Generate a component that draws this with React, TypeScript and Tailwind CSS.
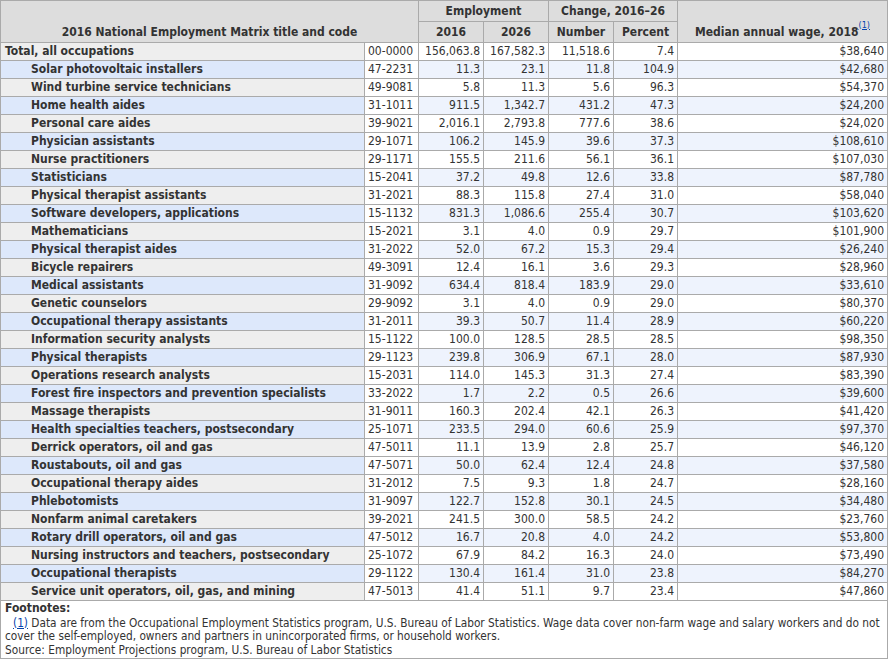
import React from 'react';

type Row = {
  title: string;
  code: string;
  emp2016: string;
  emp2026: string;
  number: string;
  percent: string;
  wage: string;
};

const rows: Row[] = [
  { title: 'Total, all occupations', code: '00-0000', emp2016: '156,063.8', emp2026: '167,582.3', number: '11,518.6', percent: '7.4', wage: '$38,640' },
  { title: 'Solar photovoltaic installers', code: '47-2231', emp2016: '11.3', emp2026: '23.1', number: '11.8', percent: '104.9', wage: '$42,680' },
  { title: 'Wind turbine service technicians', code: '49-9081', emp2016: '5.8', emp2026: '11.3', number: '5.6', percent: '96.3', wage: '$54,370' },
  { title: 'Home health aides', code: '31-1011', emp2016: '911.5', emp2026: '1,342.7', number: '431.2', percent: '47.3', wage: '$24,200' },
  { title: 'Personal care aides', code: '39-9021', emp2016: '2,016.1', emp2026: '2,793.8', number: '777.6', percent: '38.6', wage: '$24,020' },
  { title: 'Physician assistants', code: '29-1071', emp2016: '106.2', emp2026: '145.9', number: '39.6', percent: '37.3', wage: '$108,610' },
  { title: 'Nurse practitioners', code: '29-1171', emp2016: '155.5', emp2026: '211.6', number: '56.1', percent: '36.1', wage: '$107,030' },
  { title: 'Statisticians', code: '15-2041', emp2016: '37.2', emp2026: '49.8', number: '12.6', percent: '33.8', wage: '$87,780' },
  { title: 'Physical therapist assistants', code: '31-2021', emp2016: '88.3', emp2026: '115.8', number: '27.4', percent: '31.0', wage: '$58,040' },
  { title: 'Software developers, applications', code: '15-1132', emp2016: '831.3', emp2026: '1,086.6', number: '255.4', percent: '30.7', wage: '$103,620' },
  { title: 'Mathematicians', code: '15-2021', emp2016: '3.1', emp2026: '4.0', number: '0.9', percent: '29.7', wage: '$101,900' },
  { title: 'Physical therapist aides', code: '31-2022', emp2016: '52.0', emp2026: '67.2', number: '15.3', percent: '29.4', wage: '$26,240' },
  { title: 'Bicycle repairers', code: '49-3091', emp2016: '12.4', emp2026: '16.1', number: '3.6', percent: '29.3', wage: '$28,960' },
  { title: 'Medical assistants', code: '31-9092', emp2016: '634.4', emp2026: '818.4', number: '183.9', percent: '29.0', wage: '$33,610' },
  { title: 'Genetic counselors', code: '29-9092', emp2016: '3.1', emp2026: '4.0', number: '0.9', percent: '29.0', wage: '$80,370' },
  { title: 'Occupational therapy assistants', code: '31-2011', emp2016: '39.3', emp2026: '50.7', number: '11.4', percent: '28.9', wage: '$60,220' },
  { title: 'Information security analysts', code: '15-1122', emp2016: '100.0', emp2026: '128.5', number: '28.5', percent: '28.5', wage: '$98,350' },
  { title: 'Physical therapists', code: '29-1123', emp2016: '239.8', emp2026: '306.9', number: '67.1', percent: '28.0', wage: '$87,930' },
  { title: 'Operations research analysts', code: '15-2031', emp2016: '114.0', emp2026: '145.3', number: '31.3', percent: '27.4', wage: '$83,390' },
  { title: 'Forest fire inspectors and prevention specialists', code: '33-2022', emp2016: '1.7', emp2026: '2.2', number: '0.5', percent: '26.6', wage: '$39,600' },
  { title: 'Massage therapists', code: '31-9011', emp2016: '160.3', emp2026: '202.4', number: '42.1', percent: '26.3', wage: '$41,420' },
  { title: 'Health specialties teachers, postsecondary', code: '25-1071', emp2016: '233.5', emp2026: '294.0', number: '60.6', percent: '25.9', wage: '$97,370' },
  { title: 'Derrick operators, oil and gas', code: '47-5011', emp2016: '11.1', emp2026: '13.9', number: '2.8', percent: '25.7', wage: '$46,120' },
  { title: 'Roustabouts, oil and gas', code: '47-5071', emp2016: '50.0', emp2026: '62.4', number: '12.4', percent: '24.8', wage: '$37,580' },
  { title: 'Occupational therapy aides', code: '31-2012', emp2016: '7.5', emp2026: '9.3', number: '1.8', percent: '24.7', wage: '$28,160' },
  { title: 'Phlebotomists', code: '31-9097', emp2016: '122.7', emp2026: '152.8', number: '30.1', percent: '24.5', wage: '$34,480' },
  { title: 'Nonfarm animal caretakers', code: '39-2021', emp2016: '241.5', emp2026: '300.0', number: '58.5', percent: '24.2', wage: '$23,760' },
  { title: 'Rotary drill operators, oil and gas', code: '47-5012', emp2016: '16.7', emp2026: '20.8', number: '4.0', percent: '24.2', wage: '$53,800' },
  { title: 'Nursing instructors and teachers, postsecondary', code: '25-1072', emp2016: '67.9', emp2026: '84.2', number: '16.3', percent: '24.0', wage: '$73,490' },
  { title: 'Occupational therapists', code: '29-1122', emp2016: '130.4', emp2026: '161.4', number: '31.0', percent: '23.8', wage: '$84,270' },
  { title: 'Service unit operators, oil, gas, and mining', code: '47-5013', emp2016: '41.4', emp2026: '51.1', number: '9.7', percent: '23.4', wage: '$47,860' },
];

const th = 'border border-[#aaaaaa] bg-[#dddddd] font-bold text-center px-1 leading-[20px]';
const num = 'border border-[#aaaaaa] text-right pr-[3px] pl-1 leading-[17px] whitespace-nowrap';

export default function App() {
  return (
    <div
      className="w-[891px] h-[661px] bg-white text-[#333333] text-[12px]"
      style={{ fontFamily: '"DejaVu Sans Condensed", "DejaVu Sans", sans-serif' }}
    >
      <table className="table-fixed border-collapse w-[887px]">
        <colgroup>
          <col className="w-[364px]" />
          <col className="w-[54px]" />
          <col className="w-[65px]" />
          <col className="w-[65px]" />
          <col className="w-[65px]" />
          <col className="w-[64px]" />
          <col className="w-[210px]" />
        </colgroup>
        <thead>
          <tr className="h-[21px]">
            <th rowSpan={2} colSpan={2} className={`${th} align-bottom`}>
              2016 National Employment Matrix title and code
            </th>
            <th colSpan={2} className={th}>Employment</th>
            <th colSpan={2} className={th}>Change, 2016–26</th>
            <th rowSpan={2} className={`${th} align-bottom`}>
              Median annual wage, 2018
              <sup className="text-[9px] font-normal text-[#0645ad] underline align-[4px]">(1)</sup>
            </th>
          </tr>
          <tr className="h-[21px]">
            <th className={th}>2016</th>
            <th className={th}>2026</th>
            <th className={th}>Number</th>
            <th className={th}>Percent</th>
          </tr>
        </thead>
        <tbody>
          {rows.map((r, i) => {
            const blue = i % 2 === 1;
            const dataBg = blue ? 'bg-[#eef3fd]' : 'bg-white';
            return (
              <tr key={r.code} className="h-[18px]">
                <th
                  className={`border border-[#aaaaaa] text-left font-bold leading-[17px] whitespace-nowrap ${
                    i === 0 ? 'pl-[4px]' : 'pl-[30px]'
                  } ${blue ? 'bg-[#dde8fb]' : 'bg-[#eeeeee]'}`}
                >
                  {r.title}
                </th>
                <td className="border border-[#aaaaaa] bg-white pl-[3px] leading-[17px]">{r.code}</td>
                <td className={`${num} ${dataBg}`}>{r.emp2016}</td>
                <td className={`${num} ${dataBg}`}>{r.emp2026}</td>
                <td className={`${num} ${dataBg}`}>{r.number}</td>
                <td className={`${num} ${dataBg}`}>{r.percent}</td>
                <td className={`${num} ${dataBg}`}>{r.wage}</td>
              </tr>
            );
          })}
        </tbody>
        <tfoot>
          <tr>
            <td colSpan={7} className="border border-[#aaaaaa] px-[4px] pt-0 pb-0">
              <div className="font-bold leading-[15px]">Footnotes:</div>
              <p className="text-[11.75px] leading-[13px] mt-[1px] whitespace-nowrap">
                <span className="pl-[8px] text-[#0645ad] underline">(1)</span> Data are from the Occupational
                Employment Statistics program, U.S. Bureau of Labor Statistics. Wage data cover non-farm wage and
                salary workers and do not
                <br />
                cover the self-employed, owners and partners in unincorporated firms, or household workers.
              </p>
              <div className="text-[11.75px] leading-[15px]">
                Source: Employment Projections program, U.S. Bureau of Labor Statistics
              </div>
            </td>
          </tr>
        </tfoot>
      </table>
    </div>
  );
}
